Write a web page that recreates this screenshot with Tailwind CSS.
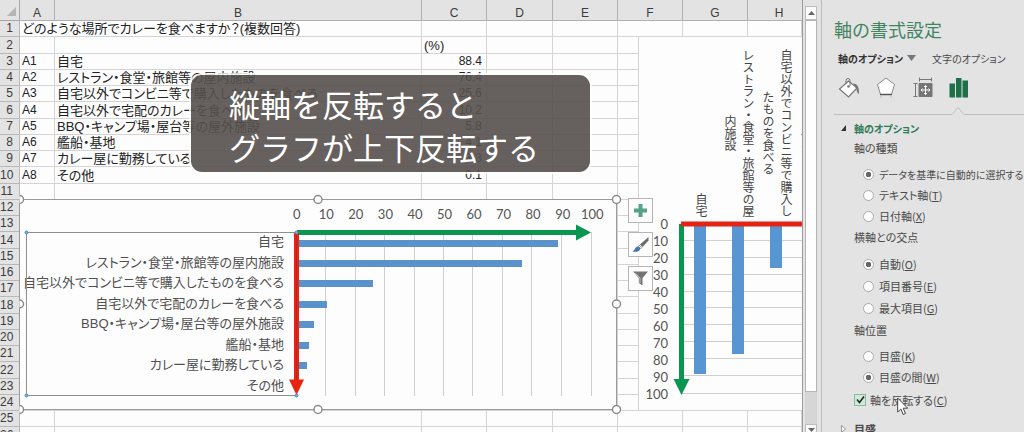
<!DOCTYPE html>
<html lang="ja">
<head>
<meta charset="utf-8">
<title>軸の書式設定</title>
<script src="https://cdn.jsdelivr.net/npm/@tailwindcss/browser@4"></script>
</head>
<body class="flex h-screen overflow-hidden bg-[#e3e3e3] font-['Liberation_Sans','Noto_Sans_CJK_JP',sans-serif] text-[#333] [font-feature-settings:'palt']">

<main class="relative min-w-0 flex-1 overflow-hidden border-r border-[#9c9c9c] bg-[#fdfdfd]">
  <table class="w-full table-fixed border-separate border-spacing-0 text-[13px]">
    <colgroup>
      <col class="w-5"><col class="w-[35px]"><col class="w-[367px]"><col class="w-[65px]"><col class="w-[66px]"><col class="w-[65px]"><col class="w-[65px]"><col class="w-[65px]"><col>
    </colgroup>
    <thead class="bg-[#e3e3e3]">
      <tr class="h-[21px] align-bottom text-[12px] leading-[14px] text-[#3c3c3c]">
        <td class="border-r border-b border-[#a8a8a8] p-0"><svg class="ml-1.5 mb-1 block" width="11" height="9" viewBox="0 0 11 9"><path d="M10 0v9H1z" fill="#b5b5b5"/></svg></td>
        <th scope="col" class="border-r border-b border-[#b0b0b0] p-0 font-normal">A</th>
        <th scope="col" class="border-r border-b border-[#b0b0b0] p-0 font-normal">B</th>
        <th scope="col" class="border-r border-b border-[#b0b0b0] p-0 font-normal">C</th>
        <th scope="col" class="border-r border-b border-[#b0b0b0] p-0 font-normal">D</th>
        <th scope="col" class="border-r border-b border-[#b0b0b0] p-0 font-normal">E</th>
        <th scope="col" class="border-r border-b border-[#b0b0b0] p-0 font-normal">F</th>
        <th scope="col" class="border-r border-b border-[#b0b0b0] p-0 font-normal">G</th>
        <th scope="col" class="border-b border-[#b0b0b0] p-0 pl-2 font-normal">H</th>
      </tr>
    </thead>
    <tbody id="rows"></tbody>
  </table>

  <!-- column chart, drawn downwards -->
  <section class="absolute top-9 right-0 left-[638px] h-[375px] overflow-hidden border border-r-0 border-[#d4d4d4] bg-[#fdfdfd] pt-2 text-[#555]">
    <div class="ml-[42px] grid h-[172px] auto-cols-[38px] grid-flow-col items-end justify-items-center text-[12px] leading-[18px] text-[#444] [font-feature-settings:normal]">
      <div class="text-center whitespace-nowrap [writing-mode:vertical-rl]">自宅</div>
      <div class="text-center whitespace-nowrap [writing-mode:vertical-rl]">レストラン・食堂・旅館等の屋<br>内施設</div>
      <div class="text-center whitespace-nowrap [writing-mode:vertical-rl]">自宅以外でコンビニ等で購入し<br>たものを食べる</div>
      <div class="text-center whitespace-nowrap [writing-mode:vertical-rl]">自宅以外で宅配のカレーを食<br>べる</div>
    </div>
    <div class="-mt-px flex gap-3.5">
      <div class="grid h-[187px] w-[29px] shrink-0 grid-rows-11 items-center justify-items-end font-['Lato',sans-serif] text-[13px] leading-[17px]">
        <span>0</span><span>10</span><span>20</span><span>30</span><span>40</span><span>50</span><span>60</span><span>70</span><span>80</span><span>90</span><span>100</span>
      </div>
      <div class="relative mt-2 h-[170px] min-w-0 flex-1">
        <div class="absolute inset-0 grid grid-rows-10 divide-y divide-[#d0d0d0] border-b border-[#d0d0d0]">
          <i></i><i></i><i></i><i></i><i></i><i></i><i></i><i></i><i></i><i></i>
        </div>
        <div class="relative -ml-px grid h-full auto-cols-[38px] grid-flow-col justify-items-center">
          <div class="w-3 bg-[#5795d3]" style="height:88.4%"></div>
          <div class="w-3 bg-[#5795d3]" style="height:76.4%"></div>
          <div class="w-3 bg-[#5795d3]" style="height:25.6%"></div>
          <div class="w-3 bg-[#5795d3]" style="height:10.2%"></div>
        </div>
      </div>
    </div>
    <svg class="absolute top-0 left-0" width="400" height="372" aria-hidden="true">
      <path d="M42.500 187V348" stroke="#0a9650" stroke-width="5"/>
      <path d="M34.500 342h16l-8 16z" fill="#0a9650"/>
      <path d="M42 187H400" stroke="#e32415" stroke-width="5"/>
    </svg>
  </section>

  <!-- selected bar chart -->
  <section class="absolute top-[199px] left-[19px] h-[211px] w-[598px] border border-[#9a9a9a] bg-[#fdfdfd] text-[#555]">
    <div class="ml-[262px] grid h-[29px] w-[325px] grid-cols-11 items-center justify-items-center font-['Lato',sans-serif] text-[13px]">
      <span>0</span><span>10</span><span>20</span><span>30</span><span>40</span><span>50</span><span>60</span><span>70</span><span>80</span><span>90</span><span>100</span>
    </div>
    <div class="mt-[3px] flex h-[164px] gap-[13px]">
      <div class="grid w-[264px] grid-rows-8 items-center justify-items-end text-[13px] leading-[18px] whitespace-nowrap text-[#505050]">
        <span>自宅</span><span>レストラン・食堂・旅館等の屋内施設</span><span>自宅以外でコンビニ等で購入したものを食べる</span><span>自宅以外で宅配のカレーを食べる</span><span>BBQ・キャンプ場・屋台等の屋外施設</span><span>艦船・基地</span><span>カレー屋に勤務している</span><span>その他</span>
      </div>
      <div class="relative w-[295px]">
        <div class="absolute inset-0 grid grid-cols-10 divide-x divide-[#d0d0d0] border-r border-[#d0d0d0]">
          <i></i><i></i><i></i><i></i><i></i><i></i><i></i><i></i><i></i><i></i>
        </div>
        <div class="relative grid h-full grid-rows-8 items-center pt-px">
          <div class="h-[7px] bg-[#5a93cc]" style="width:88.4%"></div>
          <div class="h-[7px] bg-[#5a93cc]" style="width:76.4%"></div>
          <div class="h-[7px] bg-[#5a93cc]" style="width:25.6%"></div>
          <div class="h-[7px] bg-[#5a93cc]" style="width:10.2%"></div>
          <div class="h-[7px] bg-[#5a93cc]" style="width:5.8%"></div>
          <div class="h-[7px] bg-[#5a93cc]" style="width:4.1%"></div>
          <div class="h-[7px] bg-[#5a93cc]" style="width:3.3%"></div>
          <div class="h-[7px] bg-[#5a93cc]" style="width:0.1%"></div>
        </div>
      </div>
    </div>
    <svg class="absolute -top-px -left-px overflow-visible" width="598" height="211" aria-hidden="true">
      <path d="M278 33.500H560" stroke="#0a9650" stroke-width="5"/>
      <path d="M557 25.500v16l15-8z" fill="#0a9650"/>
      <rect x="7.500" y="33.500" width="270" height="163" fill="none" stroke="#8f8f8f"/>
      <path d="M277.500 34V182" stroke="#e8240f" stroke-width="5"/>
      <path d="M277.500 34V182" stroke="#b5281c" stroke-width="1"/>
      <path d="M270 180.500h15l-7.500 15.500z" fill="#e8240f"/>
      <g fill="#7db4dc" stroke="#4a87b5"><circle cx="7.500" cy="33.500" r="1.500"/><circle cx="277.500" cy="33.500" r="1.500"/><circle cx="7.500" cy="196.500" r="1.500"/><circle cx="277.500" cy="196.500" r="1.500"/></g>
      <g fill="#fff" stroke="#8c8c8c" stroke-width="1.500"><circle cx="299" cy=".5" r="4"/><circle cx="597.500" cy=".5" r="4"/><circle cx="597.500" cy="105" r="4"/><circle cx="299" cy="210.500" r="4"/><circle cx="597.500" cy="210.500" r="4"/>
        <path d="M.5-3.500a4 4 0 0 1 0 8M.5 101a4 4 0 0 1 0 8M.5 206.500a4 4 0 0 1 0 8"/></g>
    </svg>
  </section>

  <!-- chart shortcut buttons -->
  <div class="absolute top-[198px] left-[628px] flex flex-col gap-[9px]">
    <button aria-label="グラフ要素" class="flex size-[25px] items-center justify-center border border-[#b5b5b5] bg-[#fdfdfd]"><svg width="13" height="13"><path d="M6.500 0v13M0 6.500h13" stroke="#55a288" stroke-width="4"/></svg></button>
    <button aria-label="グラフ スタイル" class="flex size-[25px] items-center justify-center border border-[#b5b5b5] bg-[#fdfdfd]"><svg width="17" height="17" viewBox="0 0 17 17"><path d="M16.500 1v3.500L10.500 11 8 8.500z" fill="#6b6b6b"/><path d="M7.300 9.200l2.500 2.500-1 1-2.500-2.500z" fill="#fff" stroke="#777" stroke-width=".8"/><path d="M5.500 10.500c2 .3 3 1.500 2.500 3C7 15.800 4 16.200.5 15.500c2.500-.8 2-4 5-5z" fill="#3f78b5"/></svg></button>
    <button aria-label="グラフ フィルター" class="flex size-[25px] items-center justify-center border border-[#b5b5b5] bg-[#fdfdfd]"><svg width="17" height="17" viewBox="0 0 17 17"><path d="M1 1.500h15L10.500 8v7.500L6.800 13V8z" fill="#747474"/><path d="M3 2.800l5 5.300v5" fill="none" stroke="#d0d0d0" stroke-width=".9"/></svg></button>
  </div>

  <!-- caption -->
  <p class="absolute top-[75px] left-[191px] h-[97px] w-[399px] rounded-[11px] bg-[#55504c]/90 pt-[7px] pl-[38px] font-['Noto_Sans_CJK_JP',sans-serif] text-[31px] leading-[43px] font-normal whitespace-nowrap text-white ring-2 ring-white/80 [font-feature-settings:normal]">縦軸を反転すると<br>グラフが上下反転する</p>
</main>

<!-- vertical scrollbar -->
<div class="flex w-[19px] shrink-0 flex-col border-r border-[#bdbdbd] pt-1.5 pr-1 pl-[2px]">
  <button aria-label="上へ" class="flex h-[14px] shrink-0 items-center justify-center border border-[#bcbcbc] bg-[#fafafa]"><svg width="7" height="4"><path d="M3.500 0L7 4H0z" fill="#666"/></svg></button>
  <div class="min-h-0 flex-1 bg-[#d6d6d6] pb-8"><div class="h-full border border-[#b5b5b5] bg-[#fefefe]"></div></div>
  <button aria-label="下へ" class="flex h-[8px] shrink-0 items-end justify-center border border-b-0 border-[#bcbcbc] bg-[#fafafa]"><svg width="7" height="4"><path d="M3.500 4L7 0H0z" fill="#666"/></svg></button>
</div>

<!-- format axis pane -->
<aside class="w-[202px] shrink-0 overflow-hidden pt-[18px] pl-3 font-['Noto_Sans_CJK_JP',sans-serif] text-[11px] whitespace-nowrap text-[#4a4a4a]">
  <h1 class="flex h-[22px] items-center text-[18px] leading-[22px] text-[#3f8562] [font-feature-settings:normal]">軸の書式設定</h1>
  <div class="mt-2 flex h-5 items-center pl-1 text-[10px]">
    <button class="flex items-center gap-1 font-bold text-[#333]">軸のオプション<svg width="9" height="6"><path d="M0 0h9L4.500 6z" fill="#777"/></svg></button>
    <button class="ml-4">文字のオプション</button>
  </div>
  <div class="mt-2 flex h-6 items-center gap-[15px] pl-1">
    <button aria-label="塗りつぶしと線"><svg width="22" height="22" viewBox="0 0 22 22" fill="none"><path d="M10.500 4l8.500 7-8.500 9L1.500 12z" fill="#fff" stroke="#777" stroke-width="1.200"/><path d="M8 7V3.500a2 2 0 0 1 4 0V9" stroke="#777"/><circle cx="10.500" cy="9.500" r="1.300" fill="#777"/><path d="M15 6.500c4 0 6.500 3 6 10.500-1.500-1-2.500-2.500-2.500-5.500z" fill="#777"/></svg></button>
    <button aria-label="効果"><svg width="22" height="22" viewBox="0 0 22 22"><path d="M11 1l8.500 6.500-3 10h-11l-3-10z" fill="#fff" stroke="#888"/><path d="M5 17.500h12" stroke="#555" stroke-width="1.500"/><path d="M5 20h2M15 20h2" stroke="#bbb"/></svg></button>
    <button aria-label="サイズとプロパティ"><svg width="22" height="22" viewBox="0 0 22 22" fill="none" stroke="#777"><path d="M7 6.500h13v13H7z" fill="#757575"/><path d="M7.500 2.500h12M7.500.5v4M19.500.5v4M3.500 7v12M1.500 6.500h4M1.500 19.500h4"/><path d="M13.500 8.500v9M9 13h9" stroke="#fff"/><path d="M12 10l1.500-1.500L15 10M12 16l1.500 1.500L15 16M10.500 11.500L9 13l1.500 1.500M16.500 11.500L18 13l-1.500 1.500" stroke="#fff"/></svg></button>
    <button aria-label="軸のオプション"><svg width="20" height="22" viewBox="0 0 20 22"><path d="M.5 6.500h5.500v14H.5zM7 1h5.500v19.500H7zM13.500 3.500H19v17h-5.500z" fill="#1e7048"/></svg></button>
  </div>
  <div class="mt-1.5 flex h-[9px]" aria-hidden="true">
    <div class="w-[118px] border-b border-[#bdbdbd]"></div>
    <svg width="12" height="9"><path d="M0 8.500L6 1.500l6 7" fill="none" stroke="#bdbdbd"/></svg>
    <div class="flex-1 border-b border-[#bdbdbd]"></div>
  </div>
  <h2 class="mt-[3px] flex h-5 items-center gap-2 pl-[7px] text-[10px] font-bold text-[#2f7a56]"><svg width="5" height="6"><path d="M5 0v6H0z" fill="#333"/></svg>軸のオプション</h2>

  <fieldset class="pl-5">
    <legend class="flex h-5 items-center">軸の種類</legend>
    <div class="pt-1.5 pl-[9px]">
      <label class="flex h-[21px] items-center gap-[5px]"><input type="radio" name="kind" checked class="size-[11px] shrink-0 appearance-none rounded-full border border-[#a9a9a9] bg-white checked:bg-[radial-gradient(circle,#666_0_2.500px,#fff_3px)]"><span class="text-[10px]">データを基準に自動的に選択する(<u>Y</u>)</span></label>
      <label class="flex h-[21px] items-center gap-[5px]"><input type="radio" name="kind" class="size-[11px] shrink-0 appearance-none rounded-full border border-[#a9a9a9] bg-white checked:bg-[radial-gradient(circle,#666_0_2.500px,#fff_3px)]"><span>テキスト軸(<u>T</u>)</span></label>
      <label class="flex h-[21px] items-center gap-[5px]"><input type="radio" name="kind" class="size-[11px] shrink-0 appearance-none rounded-full border border-[#a9a9a9] bg-white checked:bg-[radial-gradient(circle,#666_0_2.500px,#fff_3px)]"><span>日付軸(<u>X</u>)</span></label>
    </div>
  </fieldset>

  <fieldset class="pl-5">
    <legend class="flex h-5 items-center">横軸との交点</legend>
    <div class="pt-1.5 pl-[9px]">
      <label class="flex h-[22px] items-center gap-[5px]"><input type="radio" name="cross" checked class="size-[11px] shrink-0 appearance-none rounded-full border border-[#a9a9a9] bg-white checked:bg-[radial-gradient(circle,#666_0_2.500px,#fff_3px)]"><span>自動(<u>O</u>)</span></label>
      <label class="flex h-[22px] items-center gap-[5px]"><input type="radio" name="cross" class="size-[11px] shrink-0 appearance-none rounded-full border border-[#a9a9a9] bg-white checked:bg-[radial-gradient(circle,#666_0_2.500px,#fff_3px)]"><span>項目番号(<u>E</u>)</span></label>
      <label class="flex h-[22px] items-center gap-[5px]"><input type="radio" name="cross" class="size-[11px] shrink-0 appearance-none rounded-full border border-[#a9a9a9] bg-white checked:bg-[radial-gradient(circle,#666_0_2.500px,#fff_3px)]"><span>最大項目(<u>G</u>)</span></label>
    </div>
  </fieldset>

  <fieldset class="pl-5">
    <legend class="flex h-[22px] items-center">軸位置</legend>
    <div class="pt-[5px] pl-[9px]">
      <label class="flex h-[21px] items-center gap-[5px]"><input type="radio" name="pos" class="size-[11px] shrink-0 appearance-none rounded-full border border-[#a9a9a9] bg-white checked:bg-[radial-gradient(circle,#666_0_2.500px,#fff_3px)]"><span>目盛(<u>K</u>)</span></label>
      <label class="flex h-[21px] items-center gap-[5px]"><input type="radio" name="pos" checked class="size-[11px] shrink-0 appearance-none rounded-full border border-[#a9a9a9] bg-white checked:bg-[radial-gradient(circle,#666_0_2.500px,#fff_3px)]"><span>目盛の間(<u>W</u>)</span></label>
    </div>
    <label class="relative flex h-6 items-center gap-1">
      <input type="checkbox" checked class="size-3 shrink-0 appearance-none border border-[#8fb8a2] bg-[#cdebd9]">
      <svg class="pointer-events-none absolute top-[7px] left-[2px]" width="9" height="9"><path d="M1 4.500l2.500 3L8 1.500" fill="none" stroke="#222" stroke-width="1.500"/></svg>
      <span>軸を反転する(<u>C</u>)</span>
      <svg class="pointer-events-none absolute top-[9px] left-[43px]" width="12" height="20" viewBox="0 0 12 20"><path d="M.7 1v14l3.200-3 2.300 5.500 2.300-1L6.200 11.200h4.500z" fill="#fff" stroke="#444"/></svg>
    </label>
  </fieldset>
  <h2 class="mt-[7px] flex h-5 items-center gap-2 pl-[7px] font-bold"><svg width="5" height="8"><path d="M.5.5l4 3.500-4 3.500z" fill="#fff" stroke="#999"/></svg>目盛</h2>
</aside>

<script>
  const data = {
    2: ['', '', '(%)'],
    3: ['A1', '自宅', '88.4'],
    4: ['A2', 'レストラン・食堂・旅館等の屋内施設', '76.4'],
    5: ['A3', '自宅以外でコンビニ等で購入したものを食べる', '25.6'],
    6: ['A4', '自宅以外で宅配のカレーを食べる', '10.2'],
    7: ['A5', 'BBQ・キャンプ場・屋台等の屋外施設', '5.8'],
    8: ['A6', '艦船・基地', '4.1'],
    9: ['A7', 'カレー屋に勤務している', '3.3'],
    10: ['A8', 'その他', '0.1'],
  };
  const cell = (text, extra = '', span = 1) =>
    `<td colspan="${span}" class="border-r border-b border-[#d4d4d4] p-0 ${extra}"><div class="h-[15px] pl-0.5 leading-[15px] whitespace-nowrap text-[#222]">${text}</div></td>`;
  let html = '';
  for (let r = 1; r <= 26; r++) {
    const d = data[r] || ['', '', ''];
    const first = r === 1
      ? cell('どのような場所でカレーを食べますか？(複数回答)', '', 2)
      : cell(d[0], 'text-[12px]') + cell(d[1]);
    html += `<tr class="${r % 4 === 2 ? 'h-[17px]' : 'h-4'}">
      <th scope="row" class="border-r border-b border-[#b8b8b8] bg-[#e3e3e3] p-0 font-normal"><div class="h-[15px] pr-1.5 text-right text-[12px] leading-[15px] text-[#3c3c3c]">${r}</div></th>
      ${first}${cell(d[2], r > 2 ? 'pr-1 text-right text-[12px]' : '')}${cell('')}${cell('')}${cell('')}${cell('')}${cell('')}</tr>`;
  }
  document.getElementById('rows').innerHTML = html;
</script>
</body>
</html>
